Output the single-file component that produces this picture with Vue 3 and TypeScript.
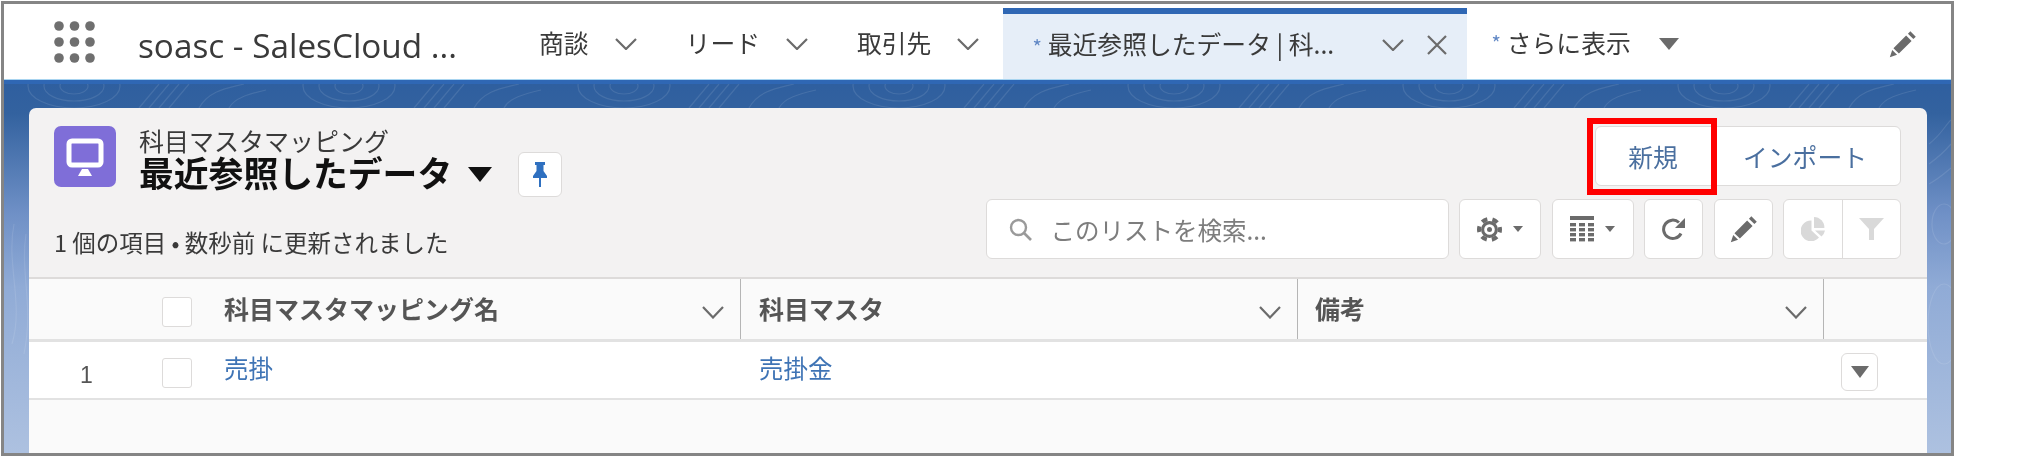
<template>
  <div class="page">
    <div class="frame">
      <!-- global nav -->
      <nav class="nav">
        <svg class="apps" width="41" height="42" viewBox="0 0 41 42">
          <template v-for="y in [5, 21, 37]" :key="y">
            <circle v-for="x in [5, 20.5, 36]" :key="x" :cx="x" :cy="y" r="4.8" fill="#6f6f6f" />
          </template>
        </svg>
        <span class="brand">soasc - SalesCloud ...</span>

        <div v-for="item in navItems" :key="item" class="nav-item">
          <span>{{ item }}</span>
          <svg class="chev" width="24" height="12" viewBox="0 0 24 12"><polyline points="2,1 12,11 22,1" /></svg>
        </div>

        <div class="tab">
          <span class="star">*</span>
          <span class="tab-label">最近参照したデータ | 科...</span>
          <svg class="chev" width="24" height="12" viewBox="0 0 24 12"><polyline points="2,1 12,11 22,1" /></svg>
          <svg class="close" width="20" height="20" viewBox="0 0 20 20"><path d="M1 1 19 19M19 1 1 19" /></svg>
        </div>

        <div class="more">
          <span class="star">*</span>
          <span>さらに表示</span>
          <svg width="20" height="12" viewBox="0 0 20 12"><path d="M0 0H20L10 12Z" fill="#6b6b6b" /></svg>
        </div>

        <svg class="nav-pencil" width="29" height="29" viewBox="0 0 24 24"><path :d="pencilPath" fill="#6b6b6b" /></svg>
      </nav>

      <div class="body">
        <!-- contour texture behind the card -->
        <svg class="texture" width="1947" height="368" viewBox="0 0 1947 368">
          <g fill="none" stroke="#fff" stroke-opacity="0.1" stroke-width="1.2">
            <g v-for="x in patternXs" :key="x" :transform="`translate(${x} 0)`">
              <ellipse cx="70" cy="2" rx="46" ry="22" />
              <ellipse cx="70" cy="2" rx="30" ry="15" />
              <ellipse cx="70" cy="2" rx="14" ry="8" />
              <path d="M135 24 155 0M145 24 165 0M155 24 175 0M165 24 185 0" />
              <path d="M195 24C205 6 225 4 240 0M225 24C230 14 245 10 262 6" />
              <path d="M10 140C2 180 20 220 8 260M22 150C16 190 30 220 20 270" />
            </g>
            <path d="M1925 60C1938 50 1942 40 1947 36M1925 80C1936 72 1942 66 1947 60M1925 100C1936 94 1942 88 1947 84" />
            <ellipse cx="1940" cy="140" rx="12" ry="20" />
            <ellipse cx="1940" cy="240" rx="16" ry="40" />
          </g>
        </svg>

        <section class="card">
          <header class="card-head">
            <div class="head-left">
              <div class="title-row">
                <svg class="obj-icon" width="62" height="61" viewBox="0 0 62 61">
                  <rect width="62" height="61" rx="7" fill="#7f6ed8" />
                  <rect x="15" y="15" width="32" height="24" rx="3" fill="none" stroke="#fff" stroke-width="5" />
                  <path d="M17 39H45V41H17Z" fill="#fff" />
                  <path d="M28 43H34L38 50H24Z" fill="#fff" />
                </svg>
                <div class="titles">
                  <div class="obj-name">科目マスタマッピング</div>
                  <div class="view-row">
                    <h1 class="view-name">最近参照したデータ</h1>
                    <svg width="24" height="15" viewBox="0 0 24 15"><path d="M0 0H24L12 15Z" fill="#111" /></svg>
                    <button class="pin">
                      <svg width="14" height="25" viewBox="0 0 14 25"><path d="M2 0H12V3H10.5V9L14 14V16H8V25H6V16H0V14L3.5 9V3H2Z" fill="#2f70c0" /></svg>
                    </button>
                  </div>
                </div>
              </div>
              <p class="meta">1 個の項目 • 数秒前 に更新されました</p>
            </div>

            <div class="head-right">
              <div class="btn-group actions">
                <button class="action new-btn">新規</button>
                <button class="action import-btn">インポート</button>
              </div>
              <div class="tools">
                <label class="search">
                  <svg width="24" height="23" viewBox="0 0 24 23"><circle cx="9.5" cy="9.5" r="7.5" fill="none" stroke="#9a9a9a" stroke-width="2.4" /><path d="M15 15 22 22" stroke="#9a9a9a" stroke-width="2.6" /></svg>
                  <span>このリストを検索...</span>
                </label>
                <button class="tool w82">
                  <svg width="25" height="25" viewBox="0 0 24 24">
                    <circle cx="12" cy="12" r="10" fill="none" stroke="#6b6b6b" stroke-width="4" stroke-dasharray="5.5 4.97" stroke-dashoffset="2.7" />
                    <circle cx="12" cy="12" r="6.6" fill="none" stroke="#6b6b6b" stroke-width="3" />
                    <circle cx="12" cy="12" r="2.4" fill="#6b6b6b" />
                  </svg>
                  <svg width="10" height="6" viewBox="0 0 10 6"><path d="M0 0H10L5 6Z" fill="#6b6b6b" /></svg>
                </button>
                <button class="tool w82">
                  <svg width="24" height="26" viewBox="0 0 24 26">
                    <rect width="24" height="4" fill="#6b6b6b" />
                    <g fill="#6b6b6b">
                      <template v-for="y in [7, 12, 17, 22]" :key="y">
                        <rect v-for="x in [0, 9, 18]" :key="x" :x="x" :y="y" width="6" height="3.4" />
                      </template>
                    </g>
                  </svg>
                  <svg width="10" height="6" viewBox="0 0 10 6"><path d="M0 0H10L5 6Z" fill="#6b6b6b" /></svg>
                </button>
                <button class="tool w59">
                  <svg width="24" height="24" viewBox="0 0 24 24">
                    <path d="M19 16.5A9.2 9.2 0 1 1 17 5.5" fill="none" stroke="#6b6b6b" stroke-width="3" />
                    <path d="M23 1V11H13Z" fill="#6b6b6b" />
                  </svg>
                </button>
                <button class="tool w59">
                  <svg width="29" height="29" viewBox="0 0 24 24"><path :d="pencilPath" fill="#6b6b6b" /></svg>
                </button>
                <div class="btn-group disabled-group">
                  <button class="tool-seg">
                    <svg width="24" height="24" viewBox="0 0 24 24">
                      <path d="M10.5 3.5V13.5L18 20.5A10.4 10.4 0 1 1 10.5 3.5Z" fill="#d9d9d9" />
                      <path d="M13 0A10.6 10.6 0 0 1 23.4 11H13Z" fill="#d9d9d9" />
                      <path d="M14 13.5H24A10.6 10.6 0 0 1 20.5 19.5Z" fill="#d9d9d9" />
                    </svg>
                  </button>
                  <button class="tool-seg">
                    <svg width="25" height="22" viewBox="0 0 25 22"><path d="M0 0H25L15 11V22H10V11Z" fill="#d9d9d9" /></svg>
                  </button>
                </div>
              </div>
            </div>
          </header>

          <div class="table">
            <div class="thead">
              <div v-for="(col, i) in columns" :key="col" class="th">
                <template v-if="i === 0">
                  <span class="idx"></span>
                  <span class="check"></span>
                </template>
                <span class="th-label" :class="{ first: i === 0 }">{{ col }}</span>
                <svg class="chev th-chev" width="24" height="13" viewBox="0 0 24 13"><polyline points="2,1 12,11.5 22,1" /></svg>
              </div>
              <div class="th th-end"></div>
            </div>
            <div v-for="(row, n) in rows" :key="row.name" class="tr">
              <div class="td">
                <span class="idx num">{{ n + 1 }}</span>
                <span class="check"></span>
                <a class="link first">{{ row.name }}</a>
              </div>
              <div class="td pad"><a class="link">{{ row.account }}</a></div>
              <div class="td"></div>
              <div class="td end">
                <button class="row-menu">
                  <svg width="18" height="12" viewBox="0 0 18 12"><path d="M0 0H18L9 12Z" fill="#6b6b6b" /></svg>
                </button>
              </div>
            </div>
            <div class="tfill"></div>
          </div>
        </section>
      </div>

      <!-- annotation drawn on top of the screenshot -->
      <div class="callout"></div>
    </div>
  </div>
</template>

<script setup lang="ts">
const navItems = ['商談', 'リード', '取引先']
const columns = ['科目マスタマッピング名', '科目マスタ', '備考']
const rows = [{ name: '売掛', account: '売掛金' }]
const patternXs = [0, 275, 550, 825, 1100, 1375, 1650]

const pencilPath = 'M4.5 15 15 4.5 19.5 9 9 19.5ZM16.5 3 18.5 1 23 5.5 21 7.5ZM3.5 16.5 7.5 20.5 1.5 22.5Z'
</script>

<style>
html, body { margin: 0; background: #fff; }
</style>

<style scoped>
.page {
  width: 2027px;
  height: 461px;
  overflow: hidden;
  background: #fff;
  font-family: "Noto Sans CJK JP", "Liberation Sans", sans-serif;
  color: #3e3e3c;
}
.frame {
  position: relative;
  box-sizing: border-box;
  width: 1953px;
  height: 455px;
  margin: 1px 0 0 1px;
  border: 3px solid #858585;
  display: flex;
  flex-direction: column;
  filter: blur(0.45px);
}

/* nav */
.nav {
  box-sizing: border-box;
  height: 80px;
  flex: none;
  display: flex;
  align-items: center;
  padding: 0 34px 0 50px;
  background: #fff;
  border-bottom: 4px solid #2f67b4;
  box-shadow: inset 0 -1px #a8d4f0;
  font-size: 24.8px;
  color: #3a3a3a;
}
.apps { flex: none; margin-right: 43px; }
.brand {
  width: 401px;
  flex: none;
  font-family: "Open Sans", sans-serif;
  font-size: 33.3px;
  color: #3a3a3a;
  white-space: nowrap;
  margin-top: 5px;
}
.nav-item {
  display: flex;
  align-items: center;
  gap: 25px;
  margin-right: 48px;
}
.chev { flex: none; }
.nav-item .chev { margin-top: 4px; }
.chev polyline { fill: none; stroke: #6b6b6b; stroke-width: 2.2; }
.tab {
  box-sizing: border-box;
  align-self: flex-start;
  height: 71px;
  margin: 4px 0 0 -25px;
  width: 464px;
  flex: none;
  display: flex;
  align-items: center;
  padding-left: 29px;
  background: #e6eef8;
  border-top: 6px solid #2f67b4;
}
.star { color: #5f86c4; font-size: 20px; margin-right: 6px; }
.tab-label { width: 333px; flex: none; white-space: nowrap; margin-top: -7px; }
.tab .chev { margin-top: -3px; }
.close { margin: -4px 0 0 22px; }
.close path { stroke: #6b6b6b; stroke-width: 2.2; }
.more {
  display: flex;
  align-items: center;
  margin-left: 24px;
}
.more svg { margin: 3px 0 0 28px; }
.nav-pencil { margin-left: auto; margin-top: 4px; }

/* blue body */
.body {
  position: relative;
  flex: 1;
  min-height: 0;
  display: flex;
  padding: 24px 24px 0 25px;
  background: linear-gradient(180deg, #2f5f9f 0%, #33629f 8%, #6f90c6 35%, #90abd6 55%, #adc1e0 100%);
}
.texture { position: absolute; left: 0; top: 0; }

.card {
  position: relative;
  flex: 1;
  display: flex;
  flex-direction: column;
  background: #f3f2f2;
  border-radius: 7px 7px 0 0;
}
.card-head {
  box-sizing: border-box;
  height: 169px;
  flex: none;
  display: flex;
  justify-content: space-between;
  padding: 18px 26px 0 25px;
}
.title-row { display: flex; gap: 23px; }
.obj-icon { flex: none; }
.obj-name {
  font-size: 25px;
  line-height: 26px;
  padding-top: 1px;
  margin-bottom: -1px;
  color: #3a3a3a;
  white-space: nowrap;
}
.view-row { display: flex; align-items: center; height: 45px; }
.view-name {
  margin: -4px 16px 0 0;
  font-size: 34.8px;
  line-height: 45px;
  font-weight: 700;
  color: #111;
  white-space: nowrap;
}
button {
  font: inherit;
  padding: 0;
  cursor: pointer;
}
.pin {
  box-sizing: border-box;
  width: 44px;
  height: 45px;
  margin-left: 26px;
  background: #fff;
  border: 1.5px solid #dddbda;
  border-radius: 6px;
  display: flex;
  align-items: center;
  justify-content: center;
}
.meta {
  margin: 30px 0 0;
  font-size: 23.5px;
  line-height: 30px;
  color: #3a3a3a;
  white-space: nowrap;
}
.head-right {
  display: flex;
  flex-direction: column;
  align-items: flex-end;
  gap: 13px;
}
.btn-group {
  display: flex;
  box-sizing: border-box;
  background: #fff;
  border: 1.5px solid #dddbda;
  border-radius: 6px;
}
.actions { height: 60px; width: 306px; }
.action {
  border: 0;
  background: transparent;
  color: #4a6f9f;
  font-size: 24.8px;
}
.new-btn { width: 114px; }
.import-btn { flex: 1; }
.tools { display: flex; gap: 10.5px; height: 60px; }
.search {
  box-sizing: border-box;
  width: 463px;
  display: flex;
  align-items: center;
  gap: 18px;
  padding-left: 22px;
  background: #fff;
  border: 1.5px solid #dddbda;
  border-radius: 6px;
  font-size: 24.5px;
  color: #7d7d7d;
}
.tool {
  box-sizing: border-box;
  display: flex;
  align-items: center;
  justify-content: center;
  gap: 11px;
  background: #fff;
  border: 1.5px solid #dddbda;
  border-radius: 6px;
}
.w82 { width: 82px; }
.w59 { width: 59px; }
.disabled-group { width: 118px; }
.tool-seg {
  flex: 1;
  display: flex;
  align-items: center;
  justify-content: center;
  background: transparent;
  border: 0;
}
.tool-seg + .tool-seg { border-left: 1.5px solid #dddbda; }

/* table */
.table {
  flex: 1;
  display: flex;
  flex-direction: column;
  background: #fafafa;
  border-top: 2px solid #dddbda;
}
.thead, .tr {
  display: grid;
  grid-template-columns: 712px 557px 526px 103px;
  flex: none;
  box-sizing: border-box;
}
.thead { height: 63px; border-bottom: 3px solid #e2e2e2; }
.th {
  display: flex;
  align-items: center;
  padding: 0 15px 0 18px;
  border-right: 1.5px solid #b5b5b5;
  font-size: 25px;
  color: #4a4a4a;
}
.th:first-child { padding-left: 51px; }
.th:nth-child(3) { padding-left: 17px; }
.th-end { border-right: 0; }
.th-chev { margin-left: auto; margin-top: 7px; }
.th .check { margin-top: 5px; }
.idx { width: 82px; flex: none; }
.check {
  box-sizing: border-box;
  width: 30px;
  height: 30px;
  flex: none;
  background: #fff;
  border: 1.5px solid #dddbda;
  border-radius: 3px;
}
.first { margin-left: 32px; }
.th-label { white-space: nowrap; font-weight: 700; color: #555; margin-top: -3px; }
.tr { height: 58px; background: #fff; border-bottom: 2px solid #e2e2e2; }
.td { display: flex; align-items: center; }
.td:first-child { padding-left: 51px; }
.pad { padding-left: 18px; }
.end { padding-left: 17px; }
.num { font-family: "Liberation Sans", sans-serif; font-size: 23px; color: #555; padding-top: 10px; box-sizing: border-box; }
.td .check { margin-top: 6px; }
.link { color: #3f74b5; font-size: 24.5px; margin-top: -5px; white-space: nowrap; }
.row-menu {
  box-sizing: border-box;
  width: 37px;
  height: 38px;
  margin-top: 3px;
  display: flex;
  align-items: center;
  justify-content: center;
  background: #fff;
  border: 1.5px solid #dddbda;
  border-radius: 6px;
}
.tfill { flex: 1; }

.callout {
  position: absolute;
  left: 1583px;
  top: 114px;
  box-sizing: border-box;
  width: 130px;
  height: 77px;
  border: 6px solid #f00;
}
</style>
